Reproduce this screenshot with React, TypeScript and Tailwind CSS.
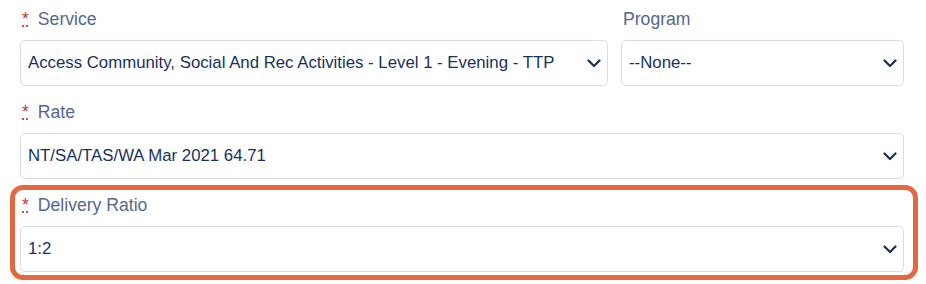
import type { ReactNode } from "react";

function Chevron() {
  return (
    <svg width="14" height="9" viewBox="0 0 14 9" fill="none" className="shrink-0">
      <path d="M1.5 1.5 L7 7 L12.5 1.5" stroke="#1c2f55" strokeWidth="2.2" strokeLinecap="round" strokeLinejoin="round" />
    </svg>
  );
}

function Label({ children, required }: { children: ReactNode; required?: boolean }) {
  return (
    <div className="flex h-[26px] items-center pl-[2px] text-[17.6px] leading-[26px] text-[#54698d]">
      {required ? (
        <abbr title="required" className="mr-[9px] text-[#c23934]">
          *
        </abbr>
      ) : null}
      <span>{children}</span>
    </div>
  );
}

function Select({ value }: { value: string }) {
  return (
    <div className="mt-[8px] flex h-[46px] items-center justify-between rounded-[5px] border border-[#d8dde6] bg-white pl-[7px] pr-[6px] text-[16.8px] text-[#16325c]">
      <span className="truncate">{value}</span>
      <Chevron />
    </div>
  );
}

export default function App() {
  return (
    <div className="h-[284px] w-[926px] bg-white pl-[20px] pr-[22px] pt-[6px] font-['Liberation_Sans',Arial,sans-serif]">
      <div className="flex gap-[13px]">
        <div className="w-[588px]">
          <Label required>Service</Label>
          <Select value="Access Community, Social And Rec Activities - Level 1 - Evening - TTP" />
        </div>
        <div className="flex-1">
          <Label>Program</Label>
          <Select value="--None--" />
        </div>
      </div>

      <div className="mt-[13px]">
        <Label required>Rate</Label>
        <Select value="NT/SA/TAS/WA Mar 2021 64.71" />
      </div>

      <div className="-ml-[10px] -mr-[14px] mt-[6px] rounded-[13px] border-[5px] border-[#e4673f] pb-[3px] pl-[5px] pr-[9px] pt-[2px]">
        <Label required>Delivery Ratio</Label>
        <Select value="1:2" />
      </div>
    </div>
  );
}
